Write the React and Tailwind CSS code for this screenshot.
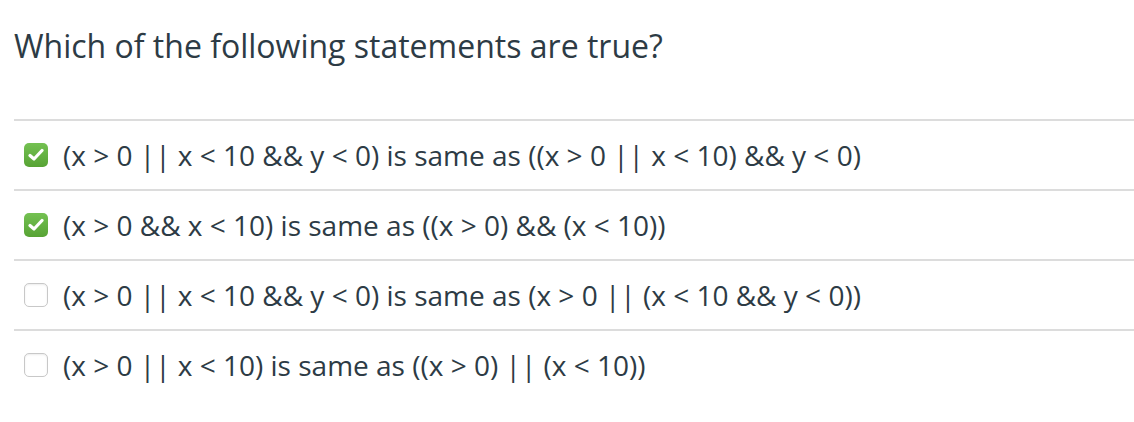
import { useState } from 'react'

const OPTIONS = [
  { text: '(x > 0 || x < 10 && y < 0) is same as ((x > 0 || x < 10) && y < 0)', checked: true },
  { text: '(x > 0 && x < 10) is same as ((x > 0) && (x < 10))', checked: true },
  { text: '(x > 0 || x < 10 && y < 0) is same as (x > 0 || (x < 10 && y < 0))', checked: false },
  { text: '(x > 0 || x < 10) is same as ((x > 0) || (x < 10))', checked: false },
]

function Box({ checked }) {
  if (checked) {
    return (
      <span className="w-6 h-6 shrink-0 rounded-[5px] bg-gradient-to-b from-[#74c152] to-[#57a334] flex items-center justify-center">
        <svg width="16" height="14" viewBox="0 0 16 14" fill="none">
          <path d="M2 7.5 L6 11 L14 2.5" stroke="#fff" strokeWidth="3.2" strokeLinecap="round" strokeLinejoin="round" />
        </svg>
      </span>
    )
  }
  return <span className="w-6 h-6 shrink-0 rounded-[5px] border border-[#c8c8c8] bg-white shadow-[inset_0_1px_2px_rgba(0,0,0,0.08)]" />
}

export default function App() {
  const [opts, setOpts] = useState(OPTIONS)
  const toggle = i => setOpts(o => o.map((x, j) => (j === i ? { ...x, checked: !x.checked } : x)))

  return (
    <div className="bg-white w-[1134px] h-[422px] pl-[14px] pt-[24px] text-[#2d3b45]" style={{ fontFamily: '"Open Sans", sans-serif' }}>
      <h1 className="text-[32px] leading-[44px] font-normal">Which of the following statements are true?</h1>
      <ul className="mt-[51px]">
        {opts.map((o, i) => (
          <li
            key={i}
            onClick={() => toggle(i)}
            className="h-[70px] flex items-center pl-[10px] gap-[15px] cursor-pointer border-t-2 border-[#dcdcdc]"
          >
            <Box checked={o.checked} />
            <span className="text-[28px] leading-none">{o.text}</span>
          </li>
        ))}
      </ul>
    </div>
  )
}
